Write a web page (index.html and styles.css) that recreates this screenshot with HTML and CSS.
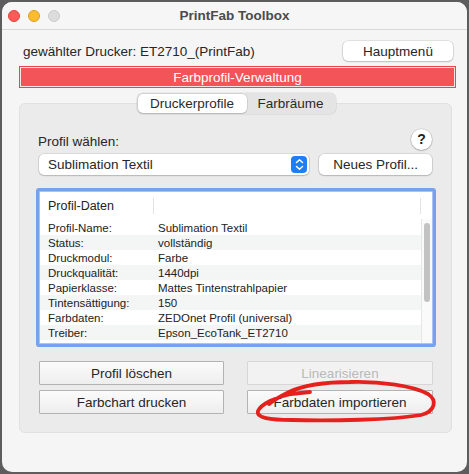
FILE: index.html
```html
<!DOCTYPE html>
<html lang="de">
<head>
<meta charset="utf-8">
<title>PrintFab Toolbox</title>
<link rel="stylesheet" href="styles.css">
</head>
<body>
<div class="window">
  <div class="titlebar">
    <div class="lights">
      <span class="light red"></span>
      <span class="light yellow"></span>
      <span class="light gray"></span>
    </div>
    <div class="title">PrintFab Toolbox</div>
    <div></div>
  </div>
  <div class="content">
    <div class="printer-row">
      <span class="printer">gewählter Drucker: ET2710_(PrintFab)</span>
      <button class="btn-round menu">Hauptmenü</button>
    </div>
    <div class="banner">Farbprofil-Verwaltung</div>
    <div class="tabs">
      <span class="tab active">Druckerprofile</span>
      <span class="tab">Farbräume</span>
    </div>
    <div class="group">
      <div class="choose-row">
        <span>Profil wählen:</span>
        <span class="help">?</span>
      </div>
      <div class="popup-row">
        <div class="popup">
          <span>Sublimation Textil</span>
          <span class="stepper">
            <svg width="9" height="13" viewBox="0 0 9 13"><path d="M1.5 4.5 L4.5 1.8 L7.5 4.5 M1.5 8.5 L4.5 11.2 L7.5 8.5" fill="none" stroke="#fff" stroke-width="1.5" stroke-linecap="round" stroke-linejoin="round"/></svg>
          </span>
        </div>
        <button class="btn-round neu">Neues Profil...</button>
      </div>
      <div class="table">
        <div class="thead">
          <div class="th th1">Profil-Daten</div>
          <div class="th th2"></div>
          <div class="th th3"></div>
        </div>
        <div class="tbody">
          <div class="rows">
            <div class="row"><span class="k">Profil-Name:</span><span>Sublimation Textil</span></div>
            <div class="row"><span class="k">Status:</span><span>vollständig</span></div>
            <div class="row"><span class="k">Druckmodul:</span><span>Farbe</span></div>
            <div class="row"><span class="k">Druckqualität:</span><span>1440dpi</span></div>
            <div class="row"><span class="k">Papierklasse:</span><span>Mattes Tintenstrahlpapier</span></div>
            <div class="row"><span class="k">Tintensättigung:</span><span>150</span></div>
            <div class="row"><span class="k">Farbdaten:</span><span>ZEDOnet Profil (universal)</span></div>
            <div class="row"><span class="k">Treiber:</span><span>Epson_EcoTank_ET2710</span></div>
            <div class="row"><span class="k"></span><span></span></div>
          </div>
          <div class="scrollbar"><div class="thumb"></div></div>
        </div>
      </div>
      <div class="btn-grid">
        <button class="btn-sq">Profil löschen</button>
        <button class="btn-sq disabled">Linearisieren</button>
        <button class="btn-sq">Farbchart drucken</button>
        <button class="btn-sq">Farbdaten importieren</button>
      </div>
    </div>
  </div>
</div>
<svg class="annotation" width="469" height="474" viewBox="0 0 469 474">
  <path d="M310 392 L291 394 C276 397 261 404 258 411 C256 418 270 420 292 420 C330 421 392 420 421 415 C436 411 437 400 428 394 C414 386 380 381 350 382 C322 382 302 386 289 392 C281 396 274 400 269 404" fill="none" stroke="#e6201d" stroke-width="3.8" stroke-linecap="round" stroke-linejoin="round"/>
</svg>
</body>
</html>
```

FILE: styles.css
```css
* { box-sizing: border-box; }

html, body {
  margin: 0;
  padding: 0;
}

body {
  width: 469px;
  height: 474px;
  overflow: hidden;
  background: #5d5d5d;
  font-family: "Liberation Sans", Arial, sans-serif;
  font-size: 13.5px;
  color: #262626;
  position: relative;
}

.window {
  margin: 2px 0 0 2px;
  width: 465px;
  height: 470px;
  background: #f5f5f5;
  border-radius: 10px;
  overflow: hidden;
  display: flex;
  flex-direction: column;
}

.titlebar {
  height: 28px;
  flex: none;
  display: grid;
  grid-template-columns: 1fr auto 1fr;
  align-items: center;
  background: #f6f6f6;
  border-bottom: 1px solid #d9d9d9;
}

.lights {
  display: flex;
  gap: 8px;
  padding-left: 6px;
}

.light {
  width: 12px;
  height: 12px;
  border-radius: 50%;
  display: block;
}

.light.red { background: #fd5b57; border: 0.5px solid #e1443f; }
.light.yellow { background: #fdbb2f; border: 0.5px solid #dd9e24; }
.light.gray { background: #dcdcdc; border: 0.5px solid #cbcbcb; }

.title {
  font-weight: bold;
  font-size: 13.5px;
  color: #4b4b4b;
}

.content {
  padding: 0 11px 0 17px;
  display: flex;
  flex-direction: column;
}

.printer-row {
  margin-top: 11px;
  display: flex;
  justify-content: space-between;
  align-items: center;
  padding: 0 3px 0 4px;
}

.printer { color: #262626; }

button {
  font-family: inherit;
  font-size: 13.5px;
  color: #262626;
  margin: 0;
  padding: 0;
}

.btn-round {
  background: #fff;
  border: none;
  border-radius: 5px;
  box-shadow: 0 0 0 0.6px rgba(0,0,0,0.16), 0 1px 1.5px rgba(0,0,0,0.16);
  height: 20px;
}

.menu { width: 110px; }

.banner {
  margin-top: 5px;
  height: 22px;
  background: #f2545a;
  border: 1px solid #e84550;
  box-shadow: inset 0 0 0 1px rgba(255,255,255,0.85);
  color: #fff;
  display: flex;
  align-items: center;
  justify-content: center;
  padding-top: 1px;
}

.tabs {
  margin: 5px 3px 0 0;
  align-self: center;
  position: relative;
  z-index: 1;
  display: flex;
  height: 21px;
  background: #e4e4e4;
  border-radius: 6px;
  box-shadow: 0 0 0 0.6px rgba(0,0,0,0.1);
  padding: 1px;
}

.tab {
  display: flex;
  align-items: center;
  justify-content: center;
  border-radius: 5px;
  color: #2a2a2a;
}

.tab.active {
  width: 109px;
  background: #fff;
  box-shadow: 0 0 0 0.5px rgba(0,0,0,0.15), 0 1px 1px rgba(0,0,0,0.12);
}

.tab:not(.active) { width: 88px; }

.group {
  margin: -11px 4px 0 0;
  height: 330px;
  background: #ebebeb;
  border: 1px solid #e0e0e0;
  border-radius: 6px;
  padding: 25px 19px 0 18px;
  display: flex;
  flex-direction: column;
}

.choose-row {
  display: flex;
  justify-content: space-between;
  align-items: center;
  height: 20px;
}

.choose-row span:first-child { margin-top: 4px; }

.help {
  width: 21px;
  height: 21px;
  border-radius: 50%;
  background: #fff;
  box-shadow: 0 0 0 0.6px rgba(0,0,0,0.15), 0 1px 1.5px rgba(0,0,0,0.2);
  display: flex;
  align-items: center;
  justify-content: center;
  font-weight: bold;
  font-size: 14px;
  color: #1e1e1e;
}

.popup-row {
  margin-top: 5px;
  display: flex;
  gap: 10px;
  padding-left: 1px;
}

.popup {
  width: 271px;
  height: 21px;
  background: #fff;
  border-radius: 5px;
  box-shadow: 0 0 0 0.6px rgba(0,0,0,0.15), 0 1px 1.5px rgba(0,0,0,0.16);
  display: flex;
  align-items: center;
  justify-content: space-between;
  padding: 0 2px 0 9px;
}

.stepper {
  width: 16px;
  height: 17px;
  border-radius: 4px;
  background: #1e7ef5;
  display: flex;
  align-items: center;
  justify-content: center;
}

.stepper svg { display: block; }

.neu { width: 113px; height: 21px; }

.table {
  margin: 16px -1px 0 1px;
  height: 153px;
  background: #fff;
  border: 1px solid #a9c3f2;
  box-shadow: 0 0 0 3px #78a1ed;
  border-radius: 1px;
  display: flex;
  flex-direction: column;
  font-size: 11.5px;
  color: #222;
  overflow: hidden;
}

.thead {
  height: 28px;
  flex: none;
  display: flex;
  align-items: center;
  font-size: 12.5px;
}

.th { height: 16px; display: flex; align-items: center; }
.th1 { width: 114px; padding-left: 8px; border-right: 1px solid #e3e3e3; }
.th2 { width: 267px; border-right: 1px solid #e3e3e3; }

.tbody {
  flex: 1;
  display: flex;
  min-height: 0;
}

.rows {
  flex: 1;
  display: flex;
  flex-direction: column;
}

.row {
  height: 15px;
  flex: none;
  display: flex;
  align-items: center;
}

.row:nth-child(even) { background: #f4f5f5; }

.k { width: 118px; padding-left: 8px; }

.scrollbar {
  width: 11px;
  flex: none;
  margin-top: -1px;
  background: #fafafa;
  border-left: 1px solid #e6e6e6;
  padding: 4px 2px 0 2px;
}

.thumb {
  width: 6px;
  height: 79px;
  border-radius: 3px;
  background: #c2c2c2;
}

.btn-grid {
  margin-top: 17px;
  display: grid;
  grid-template-columns: 185px 186px;
  column-gap: 23px;
  row-gap: 5px;
  padding-left: 1px;
}

.btn-sq {
  height: 24px;
  background: linear-gradient(#fbfbfb, #eeeeee);
  border: 1px solid #b3b3b3;
  border-radius: 1px;
}

.btn-sq.disabled {
  color: #b9b9b9;
  border-color: #d7d7d7;
  background: #f2f2f2;
}

.annotation {
  position: absolute;
  top: 0;
  left: 0;
  pointer-events: none;
}
```
